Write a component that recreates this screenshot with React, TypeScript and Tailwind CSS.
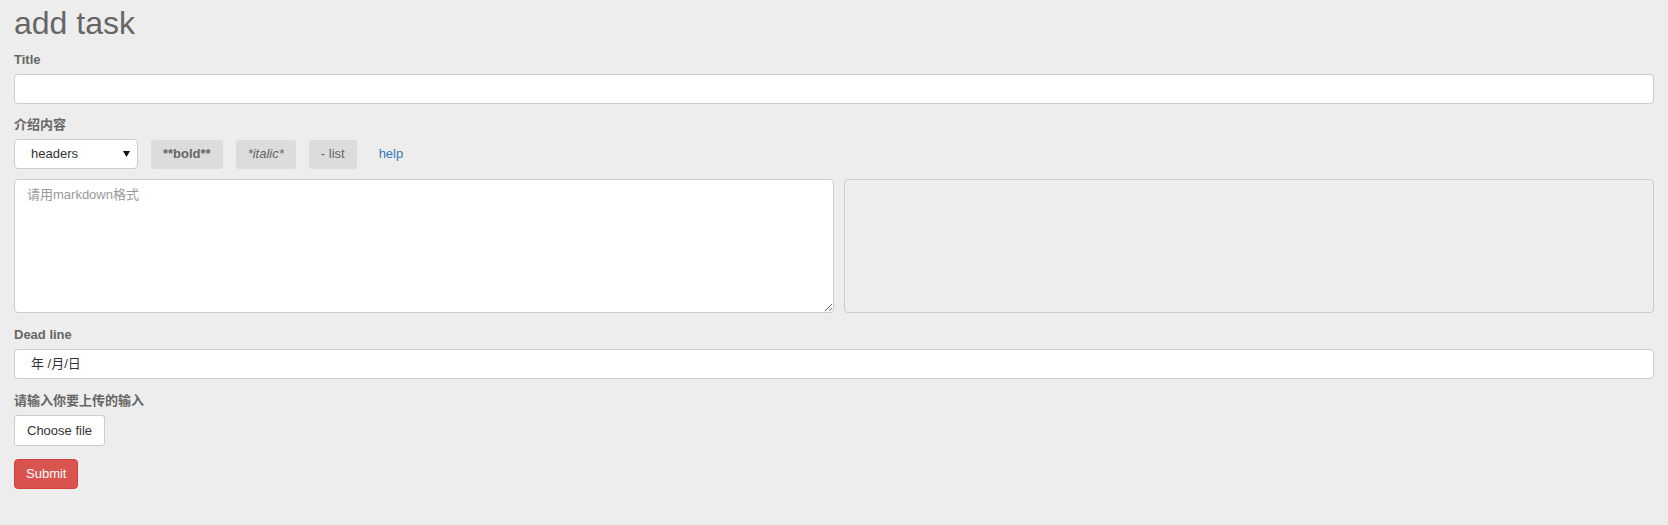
import React, { useState } from "react";

const font = { fontFamily: '"Liberation Sans", "Noto Sans CJK SC", Arial, sans-serif' };

const Label = ({ children }: { children: React.ReactNode }) => (
	<label className="block text-[13px] leading-[18px] font-bold text-[#666] mb-[5px]">
		{children}
	</label>
);

const ToolButton = ({ children, className = "" }: { children: React.ReactNode; className?: string }) => (
	<button
		type="button"
		className={`h-[29px] px-3 rounded-[3px] bg-[#dcdcdc] text-[13px] text-[#666] ${className}`}
	>
		{children}
	</button>
);

export default function App() {
	const [title, setTitle] = useState("");
	const [body, setBody] = useState("");

	return (
		<div className="min-h-screen bg-[#ededed] px-[14px] pt-[6px] text-[#333]" style={font}>
			<h1 className="text-[32px] leading-[35px] font-normal text-[#666]">add task</h1>

			<form onSubmit={(e) => e.preventDefault()}>
				{/* title */}
				<div className="mt-[10px]">
					<Label>Title</Label>
					<input
						value={title}
						onChange={(e) => setTitle(e.target.value)}
						className="block w-full h-[30px] px-3 bg-white border border-[#ccc] rounded-[4px] text-[13px] outline-none"
					/>
				</div>

				{/* content */}
				<div className="mt-[12px]">
					<Label>介绍内容</Label>
					<div className="flex items-center gap-[13px] h-[30px]">
						<div className="flex items-center justify-between w-[124px] h-[30px] pl-[16px] pr-[7px] bg-white border border-[#ccc] rounded-[4px] text-[13px] text-[#333]">
							<span>headers</span>
							<svg width="7" height="6" viewBox="0 0 7 6">
								<path d="M0 0 H7 L3.5 6 Z" fill="#111" />
							</svg>
						</div>
						<ToolButton className="font-bold">**bold**</ToolButton>
						<ToolButton className="italic">*italic*</ToolButton>
						<ToolButton>- list</ToolButton>
						<a href="#" className="pl-[9px] text-[13px] text-[#337ab7]">
							help
						</a>
					</div>

					<div className="grid grid-cols-[820px_1fr] gap-[10px] mt-[10px]">
						<textarea
							value={body}
							onChange={(e) => setBody(e.target.value)}
							placeholder="请用markdown格式"
							className="block h-[134px] px-[12px] py-[6px] bg-white border border-[#ccc] rounded-[4px] text-[13px] leading-[18px] placeholder:text-[#999] outline-none"
						/>
						<div className="h-[134px] border border-[#ccc] rounded-[4px]" />
					</div>
				</div>

				{/* deadline */}
				<div className="mt-[13px]">
					<Label>Dead line</Label>
					<div className="flex items-center w-full h-[30px] pl-[16px] bg-white border border-[#ccc] rounded-[4px] text-[13px] text-[#333]">
						年 /月/日
					</div>
				</div>

				{/* file */}
				<div className="mt-[13px]">
					<Label>请输入你要上传的输入</Label>
					<button
						type="button"
						className="h-[31px] px-[12px] bg-white border border-[#ccc] rounded-[3px] text-[13px] text-[#333]"
					>
						Choose file
					</button>
				</div>

				<button
					type="submit"
					className="block mt-[13px] h-[30px] px-[11px] bg-[#d9534f] border border-[#d43f3a] rounded-[4px] text-[13px] text-white"
				>
					Submit
				</button>
			</form>
		</div>
	);
}
